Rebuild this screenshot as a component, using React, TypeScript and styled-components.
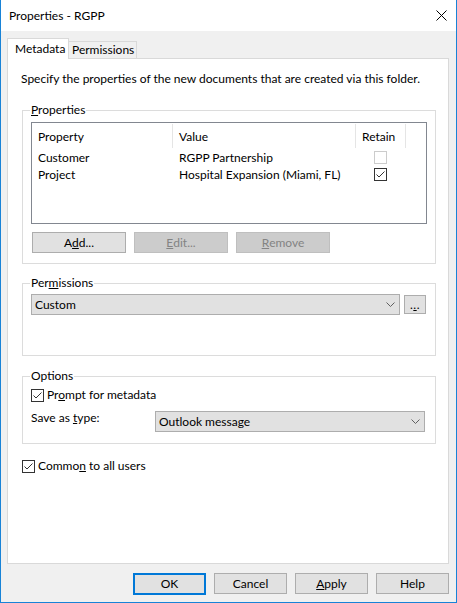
import React from 'react';
import styled, { createGlobalStyle } from 'styled-components';

const FONT = `'Segoe UI', Lato, 'Liberation Sans', sans-serif`;
const COLUMNS = '141px 183px 50px';

const GlobalStyle = createGlobalStyle`
  html, body {
    margin: 0;
    padding: 0;
    background: #ffffff;
  }
`;

const Window = styled.div`
  width: 457px;
  height: 603px;
  box-sizing: border-box;
  border: 1px solid #1883d7;
  border-top: none;
  display: flex;
  flex-direction: column;
  font-family: ${FONT};
  font-size: 12px;
  color: #000;
`;

const TitleBar = styled.div`
  height: 31px;
  flex: none;
  display: flex;
  align-items: center;
  justify-content: space-between;
  padding: 0 9px 0 8px;
  background: #fff;
`;

const Title = styled.div`
  font-size: 12px;
  line-height: 16px;
`;

const Body = styled.div`
  flex: 1;
  display: flex;
  flex-direction: column;
  padding: 7px 7px 7px 6px;
  background: #f0f0f0;
`;

const TabStrip = styled.div`
  height: 21px;
  margin-bottom: -1px;
  display: flex;
  align-items: flex-start;
`;

const Tab = styled.div<{ $active?: boolean }>`
  position: relative;
  box-sizing: border-box;
  display: flex;
  align-items: center;
  white-space: nowrap;
  border: 1px solid #d9d9d9;
  border-bottom: ${p => (p.$active ? 'none' : '1px solid #d9d9d9')};
  background: ${p => (p.$active ? '#fff' : '#f0f0f0')};
  height: ${p => (p.$active ? '21px' : '18px')};
  margin-top: ${p => (p.$active ? '0' : '3px')};
  margin-left: ${p => (p.$active ? '0' : '-1px')};
  width: ${p => (p.$active ? '62px' : 'auto')};
  min-width: 62px;
  padding: ${p => (p.$active ? '0 0 0 7px' : '0 2px 0 3px')};
  z-index: ${p => (p.$active ? 1 : 0)};
  line-height: 16px;
`;

const TabPage = styled.div`
  height: 506px;
  box-sizing: border-box;
  background: #fff;
  border: 1px solid #d9d9d9;
  padding: 12px 12px 0 14px;
  display: flex;
  flex-direction: column;
`;

const Description = styled.div`
  line-height: 16px;
  margin-left: -1px;
`;

const GroupBox = styled.div<{ $height: number; $top: number }>`
  position: relative;
  box-sizing: border-box;
  height: ${p => p.$height}px;
  margin-top: ${p => p.$top}px;
  border: 1px solid #dcdcdc;
  padding: 0 8px;
  display: flex;
  flex-direction: column;
`;

const GroupLabel = styled.div`
  position: absolute;
  top: -9px;
  left: 7px;
  padding: 0 1px;
  background: #fff;
  line-height: 16px;
`;

const Key = styled.span`
  text-decoration: underline;
  text-underline-offset: 1px;
`;

const ListView = styled.div`
  margin-top: 11px;
  height: 102px;
  box-sizing: border-box;
  border: 1px solid #828790;
  background: #fff;
`;

const ListHeader = styled.div`
  display: grid;
  grid-template-columns: ${COLUMNS};
  height: 26px;
`;

const HeaderCell = styled.div`
  display: flex;
  align-items: center;
  padding-left: 6px;
  margin: 1px 0;
  border-right: 1px solid #e5e5e5;
`;

const ListRow = styled.div`
  display: grid;
  grid-template-columns: ${COLUMNS};
  height: 17px;
`;

const Cell = styled.div<{ $center?: boolean }>`
  display: flex;
  align-items: center;
  justify-content: ${p => (p.$center ? 'center' : 'flex-start')};
  padding-left: ${p => (p.$center ? '0' : '6px')};
  padding-right: ${p => (p.$center ? '1px' : '0')};
  white-space: nowrap;
`;

const Box = styled.span<{ $disabled?: boolean }>`
  width: 13px;
  height: 13px;
  box-sizing: border-box;
  flex: none;
  border: 1px solid ${p => (p.$disabled ? '#cccccc' : '#333333')};
  background: #fff;
  display: flex;
  align-items: center;
  justify-content: center;
`;

const ButtonRow = styled.div`
  display: flex;
  gap: 8px;
  margin-top: 8px;
  padding-left: 1px;
`;

const PushButton = styled.div<{ $disabled?: boolean; $default?: boolean; $width: number }>`
  width: ${p => p.$width}px;
  height: ${p => (p.$default ? 22 : 21)}px;
  box-sizing: border-box;
  display: flex;
  align-items: center;
  justify-content: center;
  background: ${p => (p.$disabled ? '#cccccc' : '#e1e1e1')};
  border: ${p => (p.$default ? '2px solid #0078d7' : `1px solid ${p.$disabled ? '#bfbfbf' : '#adadad'}`)};
  color: ${p => (p.$disabled ? '#838383' : '#000')};
  line-height: 16px;
`;

const ComboRow = styled.div`
  display: flex;
  align-items: center;
  margin-top: 10px;
  gap: 4px;
`;

const ComboBox = styled.div<{ $width?: number }>`
  height: 21px;
  box-sizing: border-box;
  ${p => (p.$width ? `width: ${p.$width}px;` : 'flex: 1;')}
  display: flex;
  align-items: center;
  justify-content: space-between;
  padding: 0 4px 0 3px;
  background: #e1e1e1;
  border: 1px solid #adadad;
  line-height: 16px;
`;

const EllipsisButton = styled.div`
  width: 22px;
  height: 19px;
  box-sizing: border-box;
  margin-right: 1px;
  display: flex;
  align-items: center;
  justify-content: center;
  background: #e1e1e1;
  border: 1px solid #adadad;
  line-height: 14px;
  letter-spacing: 0.5px;
`;

const CheckRow = styled.label<{ $top: number; $left?: number }>`
  display: flex;
  align-items: center;
  gap: 3px;
  margin-top: ${p => p.$top}px;
  margin-left: ${p => p.$left ?? 0}px;
  line-height: 16px;
`;

const FieldRow = styled.div`
  display: flex;
  align-items: flex-start;
  margin-top: 8px;
`;

const FieldLabel = styled.div`
  width: 124px;
  line-height: 16px;
  margin-top: -1px;
`;

const DialogButtons = styled.div`
  display: flex;
  justify-content: flex-end;
  gap: 8px;
  margin-top: 9px;
`;

const Chevron = () => (
  <svg width="9" height="5" viewBox="0 0 9 5">
    <polyline points="0.5,0.5 4.5,4.5 8.5,0.5" fill="none" stroke="#606060" strokeWidth="1" />
  </svg>
);

const CheckMark = () => (
  <svg width="11" height="11" viewBox="0 0 11 11">
    <polyline points="1.5,5.5 4,8 9.5,2.5" fill="none" stroke="#333" strokeWidth="1" />
  </svg>
);

const CheckBox = ({ checked, disabled }: { checked?: boolean; disabled?: boolean }) => (
  <Box $disabled={disabled}>{checked && <CheckMark />}</Box>
);

const rows = [
  { name: 'Customer', value: 'RGPP Partnership', retain: false, disabled: true },
  { name: 'Project', value: 'Hospital Expansion (Miami, FL)', retain: true, disabled: false },
];

export default function App() {
  return (
    <>
      <GlobalStyle />
      <Window>
        <TitleBar>
          <Title>Properties - RGPP</Title>
          <svg width="11" height="11" viewBox="0 0 11 11">
            <path d="M0.5 0.5 L10.5 10.5 M10.5 0.5 L0.5 10.5" stroke="#000" strokeWidth="1" />
          </svg>
        </TitleBar>
        <Body>
          <TabStrip>
            <Tab $active>Metadata</Tab>
            <Tab>Permissions</Tab>
          </TabStrip>
          <TabPage>
            <Description>Specify the properties of the new documents that are created via this folder.</Description>

            <GroupBox $height={154} $top={23}>
              <GroupLabel><Key>P</Key>roperties</GroupLabel>
              <ListView>
                <ListHeader>
                  <HeaderCell>Property</HeaderCell>
                  <HeaderCell>Value</HeaderCell>
                  <HeaderCell>Retain</HeaderCell>
                </ListHeader>
                {rows.map(r => (
                  <ListRow key={r.name}>
                    <Cell>{r.name}</Cell>
                    <Cell>{r.value}</Cell>
                    <Cell $center><CheckBox checked={r.retain} disabled={r.disabled} /></Cell>
                  </ListRow>
                ))}
              </ListView>
              <ButtonRow>
                <PushButton $width={94}>A<Key>d</Key>d...</PushButton>
                <PushButton $width={94} $disabled><Key>E</Key>dit...</PushButton>
                <PushButton $width={94} $disabled><Key>R</Key>emove</PushButton>
              </ButtonRow>
            </GroupBox>

            <GroupBox $height={73} $top={19}>
              <GroupLabel>Per<Key>m</Key>issions</GroupLabel>
              <ComboRow>
                <ComboBox>
                  <span>Custom</span>
                  <Chevron />
                </ComboBox>
                <EllipsisButton>.<Key>.</Key>.</EllipsisButton>
              </ComboRow>
            </GroupBox>

            <GroupBox $height={68} $top={20}>
              <GroupLabel>Options</GroupLabel>
              <CheckRow $top={10}>
                <CheckBox checked />
                <span>Pr<Key>o</Key>mpt for metadata</span>
              </CheckRow>
              <FieldRow>
                <FieldLabel>Save as <Key>t</Key>ype:</FieldLabel>
                <ComboBox $width={270}>
                  <span>Outlook message</span>
                  <Chevron />
                </ComboBox>
              </FieldRow>
            </GroupBox>

            <CheckRow $top={14}>
              <CheckBox checked />
              <span>Commo<Key>n</Key> to all users</span>
            </CheckRow>
          </TabPage>
          <DialogButtons>
            <PushButton $width={73} $default>OK</PushButton>
            <PushButton $width={73}>Cancel</PushButton>
            <PushButton $width={73}><Key>A</Key>pply</PushButton>
            <PushButton $width={73}>Help</PushButton>
          </DialogButtons>
        </Body>
      </Window>
    </>
  );
}
